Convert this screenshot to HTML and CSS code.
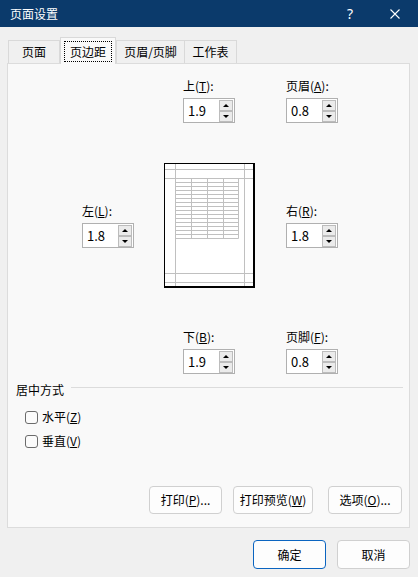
FILE: index.html
```html
<!DOCTYPE html>
<html lang="zh-CN">
<head>
<meta charset="utf-8">
<title>页面设置</title>
<link rel="stylesheet" href="styles.css">
</head>
<body>
<div class="window">
  <div class="titlebar">
    <span class="title">页面设置</span>
    <span class="help">?</span>
    <svg class="close" width="10" height="10" viewBox="0 0 10 10"><path d="M0.5 0.5L9.5 9.5M9.5 0.5L0.5 9.5" stroke="#fff" stroke-width="1.1"/></svg>
  </div>

  <div class="tabs">
    <div class="tab t1">页面</div>
    <div class="tab active t2"><span class="focus">页边距</span></div>
    <div class="tab t3">页眉/页脚</div>
    <div class="tab t4">工作表</div>
  </div>

  <div class="panel">
    <div class="margins">
      <div class="field f-top">
        <span class="lbl">上(<u>T</u>):</span>
        <div class="spin"><span class="val">1.9</span><span class="btns"><span class="sb up"></span><span class="sb down"></span></span></div>
      </div>
      <div class="field f-header">
        <span class="lbl">页眉(<u>A</u>):</span>
        <div class="spin"><span class="val">0.8</span><span class="btns"><span class="sb up"></span><span class="sb down"></span></span></div>
      </div>
      <div class="field f-left">
        <span class="lbl">左(<u>L</u>):</span>
        <div class="spin"><span class="val">1.8</span><span class="btns"><span class="sb up"></span><span class="sb down"></span></span></div>
      </div>
      <svg class="preview" width="91" height="125" viewBox="0 0 91 125">
        <rect x="0" y="0" width="91" height="125" fill="#000"/>
        <rect x="1" y="1" width="88" height="122" fill="#fff"/>
        <g stroke="#c0c0c0" stroke-width="1" fill="none">
          <path d="M11.5 1V123M80.5 1V123M1 6.5H89M1 15.5H89M1 110.5H89M1 119.5H89"/>
          <path d="M27.5 15.5V75.5M43.5 15.5V75.5M59.5 15.5V75.5M74.5 15.5V75.5"/>
          <path d="M11.5 19.5H74.5M11.5 23.5H74.5M11.5 27.5H74.5M11.5 31.5H74.5M11.5 35.5H74.5M11.5 39.5H74.5M11.5 43.5H74.5M11.5 47.5H74.5M11.5 51.5H74.5M11.5 55.5H74.5M11.5 59.5H74.5M11.5 63.5H74.5M11.5 67.5H74.5M11.5 71.5H74.5M11.5 75.5H74.5"/>
        </g>
      </svg>
      <div class="field f-right">
        <span class="lbl">右(<u>R</u>):</span>
        <div class="spin"><span class="val">1.8</span><span class="btns"><span class="sb up"></span><span class="sb down"></span></span></div>
      </div>
      <div class="field f-bottom">
        <span class="lbl">下(<u>B</u>):</span>
        <div class="spin"><span class="val">1.9</span><span class="btns"><span class="sb up"></span><span class="sb down"></span></span></div>
      </div>
      <div class="field f-footer">
        <span class="lbl">页脚(<u>F</u>):</span>
        <div class="spin"><span class="val">0.8</span><span class="btns"><span class="sb up"></span><span class="sb down"></span></span></div>
      </div>
    </div>

    <div class="group-head">
      <span>居中方式</span>
      <span class="rule"></span>
    </div>
    <div class="checks">
      <div class="check"><span class="box"></span><span>水平(<u>Z</u>)</span></div>
      <div class="check"><span class="box"></span><span>垂直(<u>V</u>)</span></div>
    </div>

    <div class="actions">
      <div class="btn b-print">打印(<u>P</u>)...</div>
      <div class="btn b-preview">打印预览(<u>W</u>)</div>
      <div class="btn b-opt">选项(<u>O</u>)...</div>
    </div>
  </div>

  <div class="footer">
    <div class="btn fbtn primary">确定</div>
    <div class="btn fbtn">取消</div>
  </div>
</div>
</body>
</html>
```
FILE: styles.css
```css
* { box-sizing: border-box; }
html, body { margin: 0; padding: 0; }
body {
  width: 418px;
  height: 577px;
  overflow: hidden;
  background: #f0f0f0;
  font-family: "Noto Sans CJK SC", "Noto Sans", sans-serif;
  font-size: 12px;
  color: #000;
}
u { text-underline-offset: 1px; }

.window {
  width: 418px;
  height: 577px;
  display: flex;
  flex-direction: column;
  background: #f0f0f0;
}

.titlebar {
  height: 27px;
  flex: none;
  background: #0b3a6b;
  color: #fff;
  display: flex;
  align-items: center;
  padding-left: 10px;
}
.title { flex: 1; font-size: 12px; line-height: 16px; }
.help {
  font-family: "Noto Sans", sans-serif;
  font-size: 14px;
  line-height: 16px;
  margin-right: 37px;
}
.close { margin-right: 18px; display: block; }

.tabs {
  display: flex;
  align-items: flex-end;
  padding-left: 8px;
  margin-top: 10px;
  height: 27px;
  margin-bottom: -1px;
  position: relative;
  z-index: 1;
  flex: none;
}
.tab {
  height: 23px;
  margin-bottom: 1px;
  border: 1px solid #d9d9d9;
  border-bottom: none;
  background: #f0f0f0;
  display: flex;
  align-items: center;
  justify-content: center;
  line-height: 16px;
}
.tab.active {
  height: 27px;
  margin-bottom: 0;
  background: #f9f9f9;
}
.t1 { width: 52px; }
.t2 { width: 56px; }
.t3 { width: 69px; }
.t4 { width: 53px; margin-left: -1px; }
.focus {
  border: 1px dotted #000;
  padding: 1px 5px;
  line-height: 17px;
}

.panel {
  margin-left: 7px;
  width: 403px;
  height: 465px;
  flex: none;
  border: 1px solid #dcdcdc;
  background: #f9f9f9;
  display: flex;
  flex-direction: column;
}

.margins {
  display: grid;
  grid-template-columns: 52px 92px 52px;
  grid-template-rows: 45px 125px 46px;
  column-gap: 30px;
  row-gap: 40px;
  padding: 14px 0 0 74px;
}
.field {
  display: flex;
  flex-direction: column;
  gap: 4px;
  width: 52px;
  justify-self: start;
}
.lbl { line-height: 16px; white-space: nowrap; }
.f-top { grid-column: 2; grid-row: 1; margin-left: 19px; }
.f-header { grid-column: 3; grid-row: 1; }
.f-left { grid-column: 1; grid-row: 2; align-self: center; }
.preview { grid-column: 2; grid-row: 2; display: block; }
.f-right { grid-column: 3; grid-row: 2; align-self: center; }
.f-bottom { grid-column: 2; grid-row: 3; margin-left: 19px; align-self: end; }
.f-footer { grid-column: 3; grid-row: 3; align-self: end; }

.spin {
  width: 52px;
  height: 25px;
  border: 1px solid #b0b0b0;
  background: #fff;
  display: flex;
}
.val {
  flex: 1;
  font-size: 13px;
  line-height: 23px;
  padding-left: 4px;
}
.btns {
  display: flex;
  flex-direction: column;
  padding-top: 1px;
  margin-right: 1px;
}
.sb {
  width: 14px;
  height: 11px;
  border: 1px solid #bcbcbc;
  background: #ebebeb;
  display: flex;
  align-items: center;
  justify-content: center;
}
.up::after {
  content: "";
  border-left: 3px solid transparent;
  border-right: 3px solid transparent;
  border-bottom: 3px solid #000;
}
.down::after {
  content: "";
  border-left: 3px solid transparent;
  border-right: 3px solid transparent;
  border-top: 3px solid #000;
}

.group-head {
  display: flex;
  padding-left: 8px;
  margin-top: 8px;
  line-height: 16px;
}
.rule {
  flex: 1;
  height: 1px;
  background: #dcdcdc;
  margin: 5px 6px 0 7px;
}
.checks {
  padding-left: 17px;
  margin-top: 11px;
  display: flex;
  flex-direction: column;
  gap: 8px;
}
.check {
  display: flex;
  align-items: center;
  gap: 4px;
  line-height: 16px;
}
.box {
  width: 13px;
  height: 13px;
  border: 1px solid #6b6b6b;
  border-radius: 3px;
  background: #fbfbfb;
}

.actions {
  margin-top: auto;
  display: flex;
  justify-content: flex-end;
  padding: 0 7px 13px 0;
}
.btn {
  height: 28px;
  border: 1px solid #d0d0d0;
  border-radius: 4px;
  background: #fdfdfd;
  display: flex;
  align-items: center;
  justify-content: center;
  line-height: 16px;
  white-space: nowrap;
}
.b-print { width: 73px; }
.b-preview { width: 80px; margin-left: 11px; }
.b-opt { width: 74px; margin-left: 15px; }

.footer {
  display: flex;
  justify-content: flex-end;
  gap: 11px;
  padding: 12px 8px 0 0;
}
.fbtn { width: 73px; height: 29px; }
.primary { border-color: #0a64c0; }
```
